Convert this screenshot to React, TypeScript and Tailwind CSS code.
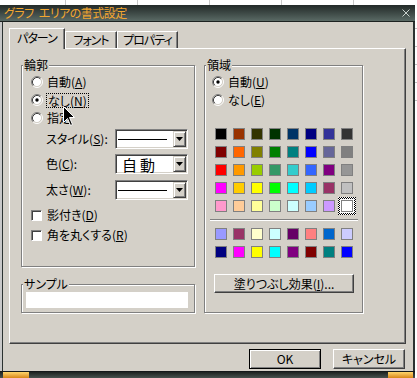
import React from 'react';

const raised =
  'border border-t-white border-l-white border-r-[#404040] border-b-[#404040] shadow-[inset_-1px_-1px_0_#808080] bg-[#d4d0c8]';
const sunken =
  'border border-t-[#808080] border-l-[#808080] border-r-white border-b-white shadow-[inset_1px_1px_0_#404040,inset_-1px_-1px_0_#d4d0c8]';
const groupBox =
  'border border-[#808080] shadow-[inset_1px_1px_0_#fff,1px_1px_0_#fff] pl-[1px]';

const palette1 = [
  ['#000000', '#993300', '#333300', '#003300', '#003366', '#000080', '#333399', '#333333'],
  ['#800000', '#FF6600', '#808000', '#008000', '#008080', '#0000FF', '#666699', '#808080'],
  ['#FF0000', '#FF9900', '#99CC00', '#339966', '#33CCCC', '#3366FF', '#800080', '#969696'],
  ['#FF00FF', '#FFCC00', '#FFFF00', '#00FF00', '#00FFFF', '#00CCFF', '#993366', '#C0C0C0'],
  ['#FF99CC', '#FFCC99', '#FFFF99', '#CCFFCC', '#CCFFFF', '#99CCFF', '#CC99FF', '#FFFFFF'],
];
const palette2 = [
  ['#9999FF', '#993366', '#FFFFCC', '#CCFFFF', '#660066', '#FF8080', '#0066CC', '#CCCCFF'],
  ['#000080', '#FF00FF', '#FFFF00', '#00FFFF', '#800080', '#800000', '#008080', '#0000FF'],
];

function Radio({ checked }: { checked?: boolean }) {
  return (
    <svg width="12" height="12" viewBox="0 0 12 12" className="shrink-0">
      <circle cx="6" cy="6" r="4.5" fill="#fff" />
      <path d="M2.11 9.89 A5.5 5.5 0 0 1 9.89 2.11" fill="none" stroke="#808080" />
      <path d="M9.89 2.11 A5.5 5.5 0 0 1 2.11 9.89" fill="none" stroke="#fff" />
      <path d="M2.82 9.18 A4.5 4.5 0 0 1 9.18 2.82" fill="none" stroke="#404040" />
      <path d="M9.18 2.82 A4.5 4.5 0 0 1 2.82 9.18" fill="none" stroke="#d4d0c8" />
      {checked && <circle cx="6" cy="6" r="1.7" fill="#000" />}
    </svg>
  );
}

function Acc({ text, k }: { text: string; k: string }) {
  return (
    <>
      {text}(<span className="underline">{k}</span>)
    </>
  );
}

function Swatches({ rows, selected }: { rows: string[][]; selected?: string }) {
  return (
    <div className="grid grid-cols-[repeat(8,12px)] gap-[6px]">
      {rows.flat().map((c, i) =>
        c === selected ? (
          <div
            key={i}
            className="-m-[3px] w-[18px] h-[18px] p-[2px] bg-[repeating-conic-gradient(#000_0_25%,#fff_0_50%)] bg-[length:2px_2px]"
          >
            <div className="w-[14px] h-[14px] p-[1px] bg-white">
              <div className="w-[12px] h-[12px] border border-[#808080]" style={{ backgroundColor: c }} />
            </div>
          </div>
        ) : (
          <div key={i} className="w-[12px] h-[12px] border border-[#808080]" style={{ backgroundColor: c }} />
        ),
      )}
    </div>
  );
}

function Combo({ children }: { children: React.ReactNode }) {
  return (
    <div className={`${sunken} w-[73px] h-[20px] p-[1px] flex bg-white`}>
      <div className="flex-1 flex items-center">{children}</div>
      <div
        className="w-[13px] flex items-center justify-center bg-[#d4d0c8] border border-t-[#d4d0c8] border-l-[#d4d0c8] border-r-[#404040] border-b-[#404040] shadow-[inset_1px_1px_0_#fff,inset_-1px_-1px_0_#808080]"
      >
        <svg width="7" height="4" viewBox="0 0 7 4">
          <path d="M0 0 H7 L3.5 4 Z" fill="#000" />
        </svg>
      </div>
    </div>
  );
}

function CheckRow({ text, k, className }: { text: string; k: string; className: string }) {
  return (
    <div className={`h-[18px] flex items-center gap-[5px] pl-[8px] ${className}`}>
      <div className="w-[11px] h-[11px] bg-white border border-t-[#808080] border-l-[#808080] border-r-white border-b-white shadow-[inset_1px_1px_0_#404040]" />
      <span className="leading-[14px]">
        <Acc text={text} k={k} />
      </span>
    </div>
  );
}

export default function App() {
  return (
    <div className="relative w-[417px] h-[378px] overflow-hidden bg-white flex flex-col text-[12px] text-black font-['Noto_Sans_CJK_JP','Noto_Sans',sans-serif] [font-feature-settings:'palt']">
      {/* sheet behind the dialog */}
      <div className="h-[5px] shrink-0 flex">
        <div className="w-[66px] border-r border-[#c8c8c8]" />
        <div className="w-[72px] border-r border-[#c8c8c8]" />
        <div className="w-[72px] border-r border-[#c8c8c8]" />
        <div className="w-[72px] border-r border-[#c8c8c8]" />
        <div className="w-[72px] border-r border-[#c8c8c8]" />
      </div>

      <div className="flex flex-1 min-h-0">
        <div className="w-[415px] flex flex-col">
          {/* title bar */}
          <div className="h-[17px] shrink-0 flex items-center justify-between pl-[4px] pr-[5px] bg-gradient-to-b from-[#232a28] to-[#5a6a65] border-b border-[#1c2220]">
            <span className="flex gap-[5px] text-[#f2a630] text-[12px] leading-none tracking-[-0.5px]">
              <span>グラフ</span>
              <span>エリアの書式設定</span>
            </span>
            <svg width="8" height="8" viewBox="0 0 8 8">
              <path d="M0.5 0.5 L7.5 7.5 M7.5 0.5 L0.5 7.5" stroke="#c8d0cc" strokeWidth="1" />
            </svg>
          </div>

          <div className="flex flex-1 min-h-0">
            <div className="w-[2px] bg-[#c8c8c8]" />
            <div className="w-px bg-[#2b3230]" />
            <div className="flex-1 bg-[#d4d0c8] flex flex-col pt-[6px] pl-[6px] pr-[7px]">
              {/* tabs */}
              <div className="flex items-end h-[20px]">
                <div className="relative z-10 -mb-px w-[56px] h-[21px] bg-[#d4d0c8] border-l border-t border-white border-r border-r-[#404040] shadow-[inset_-1px_0_0_#808080] flex items-center justify-center pb-[2px] tracking-[-1px]">
                  パターン
                </div>
                <div className="w-[52px] h-[17px] border-l border-t border-white border-r border-r-[#404040] shadow-[inset_-1px_0_0_#808080] flex items-center justify-center tracking-[-1px]">
                  フォント
                </div>
                <div className="w-[61px] h-[17px] border-l border-t border-white border-r border-r-[#404040] shadow-[inset_-1px_0_0_#808080] flex items-center justify-center tracking-[-1px]">
                  プロパティ
                </div>
              </div>

              {/* tab page */}
              <div className={`${raised} h-[296px] flex pt-[9px] pl-[11px]`}>
                <div className="w-[174px] flex flex-col">
                  <fieldset className={`${groupBox} h-[209px]`}>
                    <legend className="px-[1px] leading-[14px] bg-[#d4d0c8]">輪郭</legend>
                    <div className="flex flex-col pt-[1px]">
                      <div className="h-[18px] flex items-center gap-[4px] pl-[8px]">
                        <Radio />
                        <span className="leading-[14px]">
                          <Acc text="自動" k="A" />
                        </span>
                      </div>
                      <div className="h-[18px] flex items-center gap-[3px] pl-[8px]">
                        <Radio checked />
                        <span className="leading-[13px] px-[1px] border border-dotted border-black">
                          <Acc text="なし" k="N" />
                        </span>
                      </div>
                      <div className="h-[18px] flex items-center gap-[4px] pl-[8px]">
                        <Radio />
                        <span className="leading-[14px]">指定</span>
                      </div>

                      <div className="mt-[2px] h-[20px] flex items-center pl-[23px]">
                        <span className="w-[69px]">
                          <Acc text="スタイル" k="S" />:
                        </span>
                        <Combo>
                          <div className="ml-[1px] w-[49px] h-px bg-black" />
                        </Combo>
                      </div>
                      <div className="mt-[5px] h-[20px] flex items-center pl-[23px]">
                        <span className="w-[69px]">
                          <Acc text="色" k="C" />:
                        </span>
                        <Combo>
                          <span className="pl-[5px] text-[15px] leading-none tracking-[3px]">自動</span>
                        </Combo>
                      </div>
                      <div className="mt-[6px] h-[20px] flex items-center pl-[23px]">
                        <span className="w-[69px]">
                          <Acc text="太さ" k="W" />:
                        </span>
                        <Combo>
                          <div className="ml-[1px] w-[49px] h-px bg-black" />
                        </Combo>
                      </div>

                      <CheckRow text="影付き" k="D" className="mt-[6px]" />
                      <CheckRow text="角を丸くする" k="R" className="mt-[2px]" />
                    </div>
                  </fieldset>

                  <fieldset className={`${groupBox} mt-[10px] h-[36px]`}>
                    <legend className="px-[1px] leading-[14px] bg-[#d4d0c8]">サンプル</legend>
                    <div className="ml-[3px] mt-[1px] w-[162px] h-[16px] bg-white" />
                  </fieldset>
                </div>

                <fieldset className={`${groupBox} ml-[9px] w-[159px] h-[255px]`}>
                  <legend className="px-[1px] leading-[14px] bg-[#d4d0c8]">領域</legend>
                  <div className="flex flex-col pt-[1px]">
                    <div className="h-[18px] flex items-center gap-[4px] pl-[6px]">
                      <Radio checked />
                      <span className="leading-[14px]">
                        <Acc text="自動" k="U" />
                      </span>
                    </div>
                    <div className="h-[18px] flex items-center gap-[4px] pl-[6px]">
                      <Radio />
                      <span className="leading-[14px]">
                        <Acc text="なし" k="E" />
                      </span>
                    </div>

                    <div className="mt-[19px] ml-[9px]">
                      <Swatches rows={palette1} selected="#FFFFFF" />
                    </div>
                    <div className="mt-[7px] ml-[4px] w-[148px] h-[2px] border-t border-[#808080] border-b border-b-white" />
                    <div className="mt-[7px] ml-[9px]">
                      <Swatches rows={palette2} />
                    </div>

                    <button
                      className={`${raised} mt-[16px] ml-[8px] w-[140px] h-[19px] flex items-center justify-center leading-none`}
                    >
                      塗りつぶし効果(<span className="underline">I</span>)...
                    </button>
                  </div>
                </fieldset>
              </div>

              {/* dialog buttons */}
              <div className="mt-[5px] h-[20px] flex justify-end gap-[12px] pr-[1px]">
                <button className="w-[72px] h-[20px] border border-black bg-[#d4d0c8] shadow-[inset_1px_1px_0_#fff,inset_-1px_-1px_0_#808080] flex items-center justify-center leading-none">
                  OK
                </button>
                <button className={`${raised} w-[72px] h-[20px] flex items-center justify-center leading-none`}>
                  キャンセル
                </button>
              </div>
            </div>
            <div className="w-[2px] bg-[#2b3230]" />
          </div>

          {/* bottom frame */}
          <div className="h-[7px] shrink-0 flex bg-gradient-to-b from-[#1d2321] to-[#48534f] border-t border-[#15191a]">
            <div className="ml-[3px] w-[26px] bg-gradient-to-b from-[#ffd66a] to-[#d7860e]" />
            <div className="ml-auto mr-[2px] w-[25px] bg-gradient-to-b from-[#ffd66a] to-[#d7860e]" />
          </div>
        </div>

        {/* sheet edge on the right */}
        <div className="w-[2px] flex flex-col pt-[6px]">
          <div className="h-[18px] shrink-0 border-b border-[#c0c0c0]" />
          <div className="h-[18px] shrink-0 border-b border-[#c0c0c0]" />
          <div className="h-[18px] shrink-0 border-b border-[#c0c0c0]" />
          <div className="h-[18px] shrink-0 border-b border-[#c0c0c0]" />
          <div className="h-[18px] shrink-0 border-b border-[#c0c0c0]" />
        </div>
      </div>

      {/* mouse pointer */}
      <svg className="absolute left-[63px] top-[106px]" width="13" height="21" viewBox="0 0 13 21">
        <path d="M0.5 0.5 V16.5 L4.5 12.5 L7.5 19.5 L9.5 18.5 L6.5 11.5 H11.5 Z" fill="#000" stroke="#fff" strokeWidth="1" />
      </svg>
    </div>
  );
}
